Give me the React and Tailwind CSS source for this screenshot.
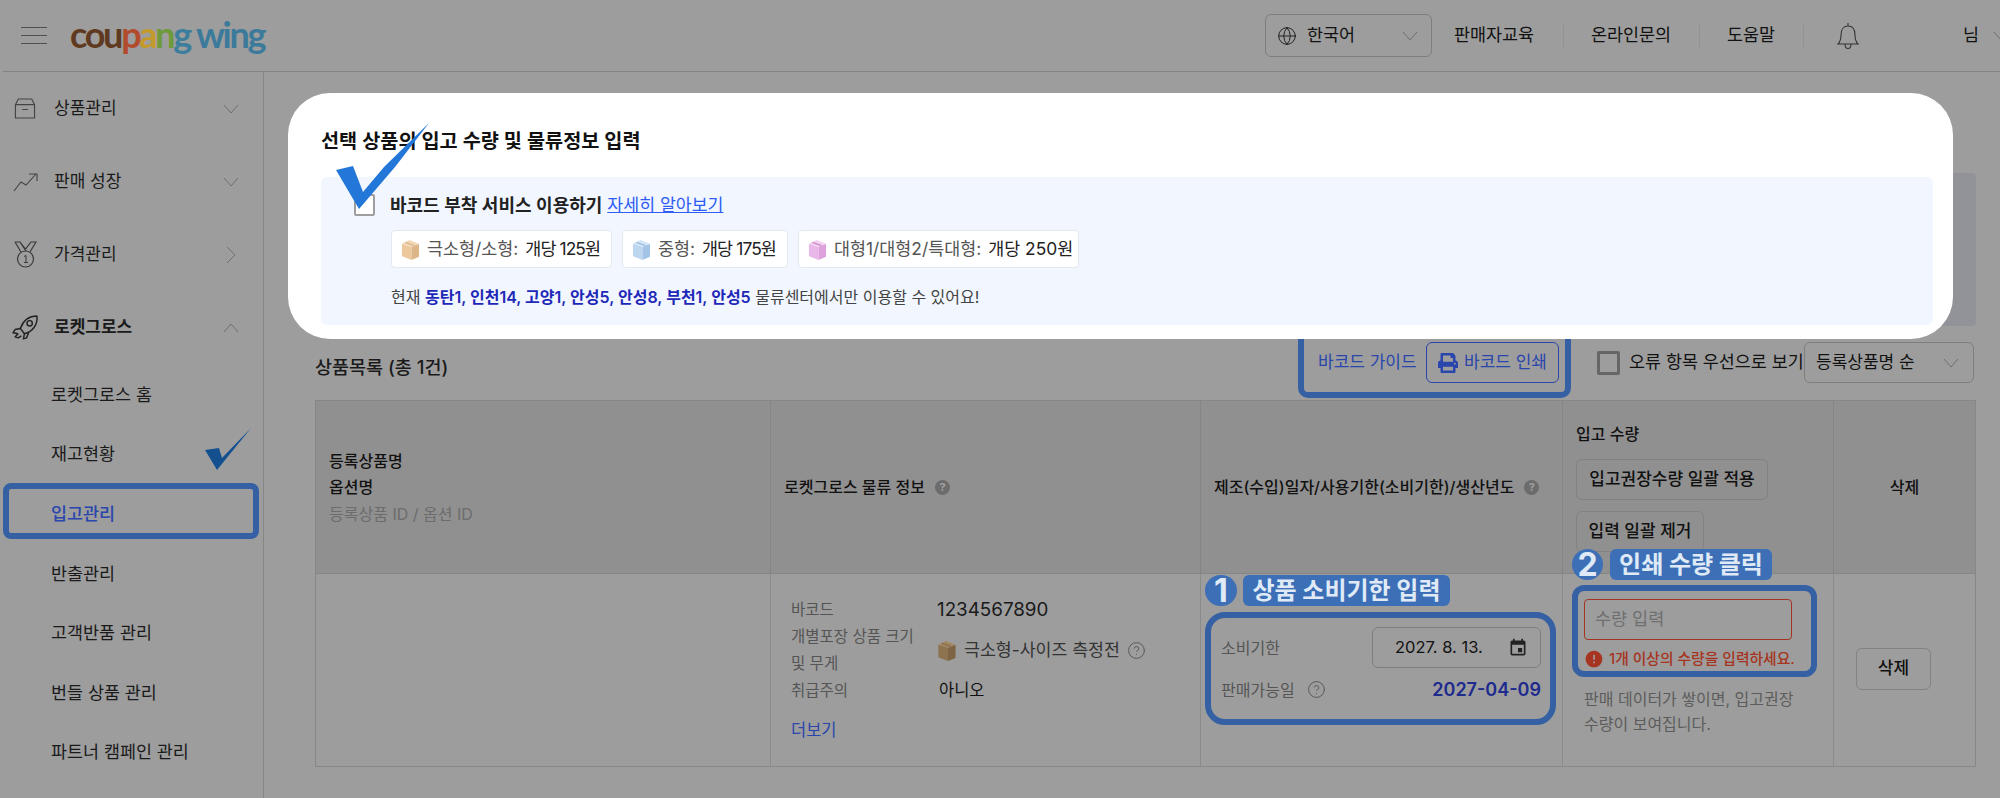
import { Globe, CircleHelp } from "lucide-react";
import { FaPrint } from "react-icons/fa";
import { MdEvent, MdError } from "react-icons/md";

const font = "font-['Inter','Noto_Sans_CJK_KR',sans-serif]";

function Chevron({ dir = "down", className = "" }) {
  const d = {
    down: "M1 1l7 8 7-8",
    up: "M1 9l7-8 7 8",
  }[dir];
  return (
    <svg viewBox="0 0 16 10" className={className} fill="none" stroke="#6f6f6f" strokeWidth="1">
      <path d={d} />
    </svg>
  );
}

function BoxIcon({ front, side, top, tape, className = "" }) {
  return (
    <svg viewBox="0 0 20 22" className={className}>
      <path d="M1 5l10 3v14l-9-3.5a1 1 0 0 1-1-1z" fill={front} />
      <path d="M11 8l8-3v13a1 1 0 0 1-.6 1L11 22z" fill={side} />
      <path d="M1 5l8-4 10 4-8 3z" fill={top} />
      <path d="M5.5 3l9.5 3.5-2 .8-9.5-3.3z" fill={tape} />
    </svg>
  );
}

function Check({ className = "", fill, d, viewBox }) {
  return (
    <svg viewBox={viewBox} className={className}>
      <path d={d} fill={fill} />
    </svg>
  );
}

function FilledHelp({ className = "" }) {
  return (
    <span className={`inline-flex items-center justify-center rounded-full bg-[#6c6c6c] text-[11px] font-bold text-[#a0a0a0] w-[15px] h-[15px] ${className}`}>
      ?
    </span>
  );
}

function SideItem({ icon, label, bold, chevron }) {
  return (
    <div className="flex items-center h-[73px]">
      <span className="w-[50px] mr-[4px] flex justify-center">{icon}</span>
      <span className={`text-[17px] text-[#1a1a1a] ${bold ? "font-semibold" : ""}`}>{label}</span>
      <span className="ml-auto mr-[24px]">{chevron}</span>
    </div>
  );
}

function SubItem({ label, active }) {
  return (
    <div className="flex items-center h-[59.6px] pl-[51px]">
      <span className={`text-[17.4px] ${active ? "text-[#2a46ac] font-medium" : "text-[#1a1a1a]"}`}>{label}</span>
    </div>
  );
}

function Chip({ box, name, price, width, priceClass = "" }) {
  return (
    <div className={`flex items-center h-[38px] bg-white border border-[#e4e8ef] rounded-[4px] pl-[9px] whitespace-nowrap ${width}`}>
      {box}
      <span className="ml-[7px] text-[#555] text-[17.4px]">{name}</span>
      <span className={`ml-[7px] text-[#222] text-[17.4px] ${priceClass}`}>{price}</span>
    </div>
  );
}

function Logo() {
  return (
    <div className="text-[36px] leading-none tracking-[-2.3px] font-['Lato',sans-serif] font-bold ml-[23px] pb-[4px]">
      <span className="text-[#5f3a20]">cou</span>
      <span className="text-[#b24a2d]">p</span>
      <span className="text-[#c49a2c]">a</span>
      <span className="text-[#6f9a3a]">n</span>
      <span className="text-[#3c7e9b]">g</span>
      <span className="text-[#3b7a9b] ml-[6px]">wing</span>
    </div>
  );
}

export default function App() {
  return (
    <div className={`relative w-[2000px] h-[798px] overflow-hidden bg-[#9d9d9d] text-[#111] ${font}`}>
      {/* header */}
      <header className="flex items-center h-[72px] border-b border-[#838383] ml-[3px]">
        <div className="ml-[18px] w-[26px] flex flex-col gap-[6.5px]">
          <span className="h-[1.5px] bg-[#505050]" />
          <span className="h-[1.5px] bg-[#505050]" />
          <span className="h-[1.5px] bg-[#505050]" />
        </div>
        <Logo />
        <div className="ml-auto flex items-center">
          <div className="flex items-center w-[167px] h-[43px] border border-[#7e7e7e] rounded-[6px] pl-[11px] pr-[13px]">
            <Globe size={20} strokeWidth={1.2} color="#222" />
            <span className="ml-[10px] text-[17.4px]">한국어</span>
            <Chevron className="ml-auto w-[16px] h-[10px]" />
          </div>
          <span className="ml-[22px] w-[109px] text-[17.4px]">판매자교육</span>
          <span className="w-px h-[22px] bg-[#929292]" />
          <span className="ml-[27px] w-[108px] text-[17.4px]">온라인문의</span>
          <span className="w-px h-[22px] bg-[#929292]" />
          <span className="ml-[27px] w-[76px] text-[17.4px]">도움말</span>
          <span className="w-px h-[22px] bg-[#929292]" />
          <svg viewBox="0 0 24 28" className="ml-[32px] w-[24px] h-[28px]" fill="none" stroke="#333" strokeWidth="1.1">
            <path d="M12 1v3M2 22c2-2 3-4 3-9 0-6 3-9 7-9s7 3 7 9c0 5 1 7 3 9zM9 22c0 6 6 6 6 0" />
          </svg>
          <span className="ml-[103px] text-[17.4px]">님</span>
          <Chevron className="ml-[14px] w-[16px] h-[10px] shrink-0 mr-[-9px]" />
        </div>
      </header>

      <div className="flex h-[726px]">
        {/* sidebar */}
        <aside className="w-[264px] shrink-0 border-r border-[#868686]">
          <SideItem
            label="상품관리"
            chevron={<Chevron className="w-[16px] h-[10px]" />}
            icon={
              <svg viewBox="0 0 22 22" className="w-[22px] h-[21px]" fill="none" stroke="#444" strokeWidth="1.2">
                <path d="M1 7l3-6h14l3 6v14H1zM1 7h20M8 12h6" />
              </svg>
            }
          />
          <SideItem
            label="판매 성장"
            chevron={<Chevron className="w-[16px] h-[10px]" />}
            icon={
              <svg viewBox="0 0 25 20" className="w-[25px] h-[20px]" fill="none" stroke="#444" strokeWidth="1.1">
                <path d="M1 19l7-9 5 3 10-11M16 2h8v7" />
              </svg>
            }
          />
          <SideItem
            label="가격관리"
            chevron={
              <svg viewBox="0 0 10 18" className="w-[10px] h-[18px] mr-[3px]" fill="none" stroke="#6f6f6f" strokeWidth="1">
                <path d="M1 1l8 8-8 8" />
              </svg>
            }
            icon={
              <svg viewBox="0 0 23 27" className="w-[23px] h-[27px]" fill="none" stroke="#3a3a3a" strokeWidth="1.2">
                <path d="M1 1h5l5.5 7L17 1h5l-6 10M1 1l6 10M6 1l6 9" />
                <circle cx="11.5" cy="18" r="8" />
                <path d="M10 15.500l2-1v7M10 21.500h4" strokeWidth="1" />
              </svg>
            }
          />
          <SideItem
            label="로켓그로스"
            bold
            chevron={<Chevron dir="up" className="w-[16px] h-[10px]" />}
            icon={
              <svg viewBox="0 0 26 24" className="w-[27px] h-[25px]" fill="none" stroke="#222" strokeWidth="1.4" strokeLinejoin="round">
                <path d="M24 1c-7 0-13 4-16 12l4 5c8-2 13-9 12-17z" />
                <circle cx="17" cy="8" r="2.600" />
                <path d="M8 13l-5 1-2 3 5 1M12 18l-1 5 3-1 2-5M6 18l-3 3 3 1 3-2" />
              </svg>
            }
          />
          <div className="mt-[1px]">
            <SubItem label="로켓그로스 홈" />
            <SubItem label="재고현황" />
            <SubItem label="입고관리" active />
            <SubItem label="반출관리" />
            <SubItem label="고객반품 관리" />
            <SubItem label="번들 상품 관리" />
            <SubItem label="파트너 캠페인 관리" />
          </div>
        </aside>

        {/* main */}
        <main className="relative flex-1 pl-[51px] pr-[26px] pt-[101px]">
          <div className="h-[153px] bg-[#929398] rounded-[4px]" />

          <div className="flex items-center h-[41px] mt-[16px]">
            <h2 className="w-[136px] pt-[10px] text-[18.500px] whitespace-nowrap font-medium text-[#1a1a1a]">상품목록 (총 1건)</h2>
            <span className="ml-[867px] w-[108px] text-[17px] whitespace-nowrap text-[#2a46ac]">바코드 가이드</span>
            <div className="flex items-center gap-[6px] w-[133px] h-[41px] pl-[11px] border border-[#2a46ac] rounded-[6px] text-[#2a46ac] text-[17px] whitespace-nowrap">
              <FaPrint size={20} />
              <span>바코드 인쇄</span>
            </div>
            <span className="ml-[38px] w-[23px] h-[24px] border-[3px] border-[#666] rounded-[2px]" />
            <span className="ml-[9px] w-[175px] text-[17.4px] whitespace-nowrap">오류 항목 우선으로 보기</span>
            <div className="flex items-center w-[170px] h-[41px] border border-[#7e7e7e] rounded-[6px] pl-[11px] pr-[14px]">
              <span className="text-[17px]">등록상품명 순</span>
              <Chevron className="ml-auto w-[16px] h-[10px]" />
            </div>
          </div>

          {/* table */}
          <div className="mt-[17px] grid grid-cols-[455px_430px_362px_271px_141px] grid-rows-[173px_192px] border border-[#878787]">
            <div className="bg-[#909090] border-r border-b border-[#858585] flex flex-col justify-center pl-[13px] text-[16px] gap-[6.5px] font-medium">
              <span className="leading-[20px]">등록상품명</span>
              <span className="leading-[20px]">옵션명</span>
              <span className="leading-[20px] text-[#6c6c6c] font-normal">등록상품 ID / 옵션 ID</span>
            </div>
            <div className="bg-[#909090] border-r border-b border-[#858585] flex items-center pl-[13px] text-[16px] font-medium">
              로켓그로스 물류 정보
              <FilledHelp className="ml-[10px]" />
            </div>
            <div className="bg-[#909090] border-r border-b border-[#858585] flex items-center pl-[13px] text-[16px] font-medium whitespace-nowrap">
              제조(수입)일자/사용기한(소비기한)/생산년도
              <FilledHelp className="ml-[10px]" />
            </div>
            <div className="bg-[#909090] border-r border-b border-[#858585] pl-[13px] pt-[23px] text-[16px] font-medium">
              <div className="leading-[20px]">입고 수량</div>
              <button className="block mt-[15px] w-[192px] h-[41px] border border-[#828282] rounded-[6px] text-[17px] font-medium whitespace-nowrap">
                입고권장수량 일괄 적용
              </button>
              <button className="block mt-[11px] w-[128px] h-[41px] border border-[#828282] rounded-[6px] text-[17px] font-medium whitespace-nowrap">
                입력 일괄 제거
              </button>
            </div>
            <div className="bg-[#909090] border-b border-[#858585] flex items-center justify-center text-[16px] font-medium">
              삭제
            </div>

            <div className="border-r border-[#8b8b8b]" />
            <div className="border-r border-[#8b8b8b] pl-[20px] pt-[22px] text-[15.500px] text-[#555]">
              <div className="grid grid-cols-[146px_1fr] items-center">
                <span className="leading-[27px]">바코드</span>
                <span className="text-[18.800px] text-[#1a1a1a] leading-[27px]">1234567890</span>
                <span className="leading-[27px] w-[135px]">개별포장 상품 크기 및 무게</span>
                <span className="flex items-center text-[17.300px] text-[#333] whitespace-nowrap">
                  <BoxIcon front="#8e7350" side="#7c6445" top="#a3875f" tape="#8a7050" className="w-[20px] h-[21px] mr-[7px]" />
                  극소형-사이즈 측정전
                  <CircleHelp size={19} strokeWidth={1.2} color="#555" className="ml-[7px]" />
                </span>
                <span className="leading-[27px]">취급주의</span>
                <span className="pl-[2px] text-[16.500px] text-[#111] leading-[27px]">아니오</span>
              </div>
              <div className="mt-[14px] text-[16.500px] text-[#2a46ac]">더보기</div>
            </div>
            <div className="relative border-r border-[#8b8b8b]">
              {/* 1번 강조 */}
              <div className="absolute left-[4px] top-[1px] flex items-center gap-[6px]">
                <span className="flex items-center justify-center w-[32px] h-[31px] rounded-full bg-[#3d6fb7] text-[#dfeaf6] text-[32px] leading-none font-bold">1</span>
                <span className="flex items-center justify-center w-[207px] h-[31px] rounded-[6px] bg-[#3d6fb7] text-[#dfeaf6] text-[24px] font-bold whitespace-nowrap">상품 소비기한 입력</span>
              </div>
              <div className="absolute left-[4px] top-[38px] w-[351px] h-[113px] border-[6px] border-[#3560a3] rounded-[20px]" />
              <div className="mt-[53px] ml-[20px] mr-[21px] flex items-center justify-between text-[16px] text-[#555]">
                <span>소비기한</span>
                <div className="relative flex items-center w-[169px] h-[41px] border border-[#7e7e7e] rounded-[6px] pl-[22px]">
                  <span className="text-[16.500px] text-[#111]">2027. 8. 13.</span>
                  <MdEvent size={20} color="#222" className="absolute right-[12px]" />
                </div>
              </div>
              <div className="mt-[8px] ml-[20px] mr-[21px] flex items-center text-[16px] text-[#555]">
                <span>판매가능일</span>
                <CircleHelp size={19} strokeWidth={1.2} color="#555" className="ml-[12px]" />
                <span className="ml-auto text-[18px] font-semibold text-[#1e2a8e]">2027-04-09</span>
              </div>
            </div>
            <div className="relative border-r border-[#8b8b8b]">
              {/* 2번 강조 */}
              <div className="absolute left-[9px] top-[-25px] flex items-center gap-[7px]">
                <span className="flex items-center justify-center w-[31px] h-[31px] rounded-full bg-[#3d6fb7] text-[#dfeaf6] text-[32px] leading-none font-bold">2</span>
                <span className="flex items-center justify-center w-[162px] h-[31px] rounded-[6px] bg-[#3d6fb7] text-[#dfeaf6] text-[24px] font-bold whitespace-nowrap">인쇄 수량 클릭</span>
              </div>
              <div className="absolute left-[9px] top-[11px] w-[245px] h-[92px] border-[6px] border-[#3560a3] rounded-[12px]" />
              <div className="mt-[25px] ml-[21px] w-[208px] h-[41px] border border-[#a33322] rounded-[4px] flex items-center pl-[10px] text-[17.500px] text-[#6f6f6f]">
                수량 입력
              </div>
              <div className="mt-[8px] ml-[21px] flex items-center gap-[5px] text-[14.800px] font-medium text-[#a63420] whitespace-nowrap">
                <MdError size={20} color="#a63420" />
                1개 이상의 수량을 입력하세요.
              </div>
              <div className="mt-[17px] ml-[21px] text-[16px] leading-[25px] text-[#5c5c5c] whitespace-nowrap">
                판매 데이터가 쌓이면, 입고권장
                <br />
                수량이 보여집니다.
              </div>
            </div>
            <div className="flex items-start">
              <button className="mt-[74px] ml-[22px] w-[75px] h-[42px] border border-[#828282] rounded-[6px] text-[17px] font-medium">
                삭제
              </button>
            </div>
          </div>

          {/* 바코드 버튼 강조 */}
          <div className="absolute left-[1034px] top-[240px] w-[273px] h-[86px] border-[6px] border-[#3560a3] rounded-[10px]" />
        </main>
      </div>

      {/* sidebar overlays */}
      <div className="absolute left-[3px] top-[483px] w-[256px] h-[56px] border-[6px] border-[#3560a3] rounded-[8px]" />
      <Check
        className="absolute left-[205px] top-[428px] w-[46px] h-[42px]"
        viewBox="0 0 46 42"
        fill="#14508f"
        d="M0 22L14 20L17 30L46 0L12 42Z"
      />

      {/* spotlight modal */}
      <div className="absolute left-[288px] top-[93px] w-[1665px] h-[246px] bg-white rounded-[42px] px-[33px] pt-[37px]">
        <h3 className="text-[19.700px] leading-[22px] font-semibold text-[#111]">선택 상품의 입고 수량 및 물류정보 입력</h3>
        <div className="mt-[25px] w-[1612px] h-[148px] bg-[#f1f6ff] rounded-[6px] pl-[33px] pt-[17px]">
          <div className="flex items-center h-[22px]">
            <span className="w-[21px] h-[22px] border-[2px] border-[#9e9e9e] rounded-[2px] bg-white" />
            <span className="ml-[15px] text-[18px] font-semibold text-[#222]">바코드 부착 서비스 이용하기</span>
            <span className="ml-[5px] text-[17.300px] text-[#2f5cf5] underline">자세히 알아보기</span>
          </div>
          <div className="flex gap-[10px] mt-[14px] ml-[37px]">
            <Chip
              width="w-[221px]"
              name="극소형/소형:"
              price="개당 125원"
              priceClass="tracking-[-0.9px]"
              box={<BoxIcon front="#edc89c" side="#dcb589" top="#f3d8b5" tape="#d9b78c" className="w-[19px] h-[21px]" />}
            />
            <Chip
              width="w-[166px]"
              name="중형:"
              price="개당 175원"
              priceClass="tracking-[-0.9px]"
              box={<BoxIcon front="#bcd6f0" side="#a3c4e6" top="#d3e4f6" tape="#9fbfe0" className="w-[19px] h-[21px]" />}
            />
            <Chip
              width="w-[281px]"
              name="대형1/대형2/특대형:"
              price="개당 250원"
              box={<BoxIcon front="#eab8e8" side="#dda2dc" top="#f3cff0" tape="#c98cc9" className="w-[19px] h-[21px]" />}
            />
          </div>
          <div className="mt-[19px] ml-[37px] text-[16px] leading-[20px] text-[#444]">
            현재 <span className="font-semibold text-[#1e28b8]">동탄1, 인천14, 고양1, 안성5, 안성8, 부천1, 안성5</span> 물류센터에서만 이용할 수 있어요!
          </div>
        </div>
      </div>

      {/* big check */}
      <Check
        className="absolute left-[336px] top-[123px] w-[93px] h-[87px]"
        viewBox="0 0 93 87"
        fill="#2377d8"
        d="M0 47L17 43L27 69L48 44L93 0L59 44L23 86Z"
      />
    </div>
  );
}
